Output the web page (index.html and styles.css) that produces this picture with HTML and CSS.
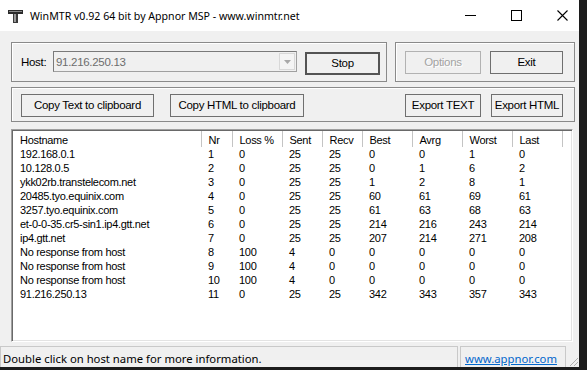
FILE: index.html
```html
<!DOCTYPE html>
<html lang="en">

<head>
    <meta charset="UTF-8">
    <title>WinMTR v0.92 64 bit by Appnor MSP - www.winmtr.net</title>
    <link rel="stylesheet" href="styles.css">
</head>

<body>
    <div class="window">
        <!-- Title bar -->
        <div class="titlebar">
            <svg class="app-icon" width="15" height="13" viewBox="0 0 15 13">
                <rect x="0" y="0" width="15" height="4" fill="#2b2b2b"/>
                <rect x="1" y="1" width="13" height="1" fill="#8a8a8a"/>
                <rect x="5" y="4" width="5" height="9" fill="#3a3a3a"/>
                <rect x="6" y="4" width="2" height="8" fill="#9a9a9a"/>
            </svg>
            <span class="title">WinMTR v0.92 64 bit by Appnor MSP - www.winmtr.net</span>
            <div class="controls">
                <span class="ctl">
                    <svg width="11" height="11" viewBox="0 0 11 11"><rect x="0" y="5" width="11" height="1" fill="#000"/></svg>
                </span>
                <span class="ctl">
                    <svg width="11" height="11" viewBox="0 0 11 11"><rect x="0.5" y="0.5" width="10" height="10" fill="none" stroke="#000"/></svg>
                </span>
                <span class="ctl">
                    <svg width="11" height="11" viewBox="0 0 11 11"><path d="M0.5 0.5 L10.5 10.5 M10.5 0.5 L0.5 10.5" stroke="#000" stroke-width="1.1"/></svg>
                </span>
            </div>
        </div>

        <!-- Client area -->
        <div class="client">
            <div class="top-row">
                <div class="group host-group">
                    <span class="host-label">Host:</span>
                    <div class="combo">
                        <span class="combo-text">91.216.250.13</span>
                        <span class="combo-drop">
                            <svg width="7" height="4" viewBox="0 0 7 4"><path d="M0 0 H7 L3.5 4 Z" fill="#a8a8a8"/></svg>
                        </span>
                    </div>
                    <button class="btn btn-default stop-btn">Stop</button>
                </div>
                <div class="group side-group">
                    <button class="btn btn-disabled options-btn">Options</button>
                    <button class="btn exit-btn">Exit</button>
                </div>
            </div>

            <div class="group tools">
                <button class="btn copy-text">Copy Text to clipboard</button>
                <button class="btn copy-html">Copy HTML to clipboard</button>
                <button class="btn export-text">Export TEXT</button>
                <button class="btn export-html">Export HTML</button>
            </div>

            <div class="list">
                <table class="hops">
                    <colgroup>
                        <col class="c-host">
                        <col class="c-nr">
                        <col class="c-50">
                        <col class="c-40">
                        <col class="c-40">
                        <col class="c-50">
                        <col class="c-50">
                        <col class="c-50">
                        <col class="c-50">
                        <col class="c-fill">
                    </colgroup>
                    <thead>
                        <tr>
                            <th>Hostname</th>
                            <th>Nr</th>
                            <th>Loss %</th>
                            <th>Sent</th>
                            <th>Recv</th>
                            <th>Best</th>
                            <th>Avrg</th>
                            <th>Worst</th>
                            <th>Last</th>
                            <th></th>
                        </tr>
                    </thead>
                    <tbody>
                        <tr><td>192.168.0.1</td><td>1</td><td>0</td><td>25</td><td>25</td><td>0</td><td>0</td><td>1</td><td>0</td><td></td></tr>
                        <tr><td>10.128.0.5</td><td>2</td><td>0</td><td>25</td><td>25</td><td>0</td><td>1</td><td>6</td><td>2</td><td></td></tr>
                        <tr><td>ykk02rb.transtelecom.net</td><td>3</td><td>0</td><td>25</td><td>25</td><td>1</td><td>2</td><td>8</td><td>1</td><td></td></tr>
                        <tr><td>20485.tyo.equinix.com</td><td>4</td><td>0</td><td>25</td><td>25</td><td>60</td><td>61</td><td>69</td><td>61</td><td></td></tr>
                        <tr><td>3257.tyo.equinix.com</td><td>5</td><td>0</td><td>25</td><td>25</td><td>61</td><td>63</td><td>68</td><td>63</td><td></td></tr>
                        <tr><td>et-0-0-35.cr5-sin1.ip4.gtt.net</td><td>6</td><td>0</td><td>25</td><td>25</td><td>214</td><td>216</td><td>243</td><td>214</td><td></td></tr>
                        <tr><td>ip4.gtt.net</td><td>7</td><td>0</td><td>25</td><td>25</td><td>207</td><td>214</td><td>271</td><td>208</td><td></td></tr>
                        <tr><td>No response from host</td><td>8</td><td>100</td><td>4</td><td>0</td><td>0</td><td>0</td><td>0</td><td>0</td><td></td></tr>
                        <tr><td>No response from host</td><td>9</td><td>100</td><td>4</td><td>0</td><td>0</td><td>0</td><td>0</td><td>0</td><td></td></tr>
                        <tr><td>No response from host</td><td>10</td><td>100</td><td>4</td><td>0</td><td>0</td><td>0</td><td>0</td><td>0</td><td></td></tr>
                        <tr><td>91.216.250.13</td><td>11</td><td>0</td><td>25</td><td>25</td><td>342</td><td>343</td><td>357</td><td>343</td><td></td></tr>
                    </tbody>
                </table>
            </div>
        </div>

        <!-- Status bar -->
        <div class="statusbar">
            <div class="panel panel-info">Double click on host name for more information.</div>
            <div class="panel panel-link"><a href="#">www.appnor.com</a></div>
            <div class="grip">
                <svg width="12" height="12" viewBox="0 0 12 12">
                    <path d="M11 3 L3 11 M11 7 L7 11" stroke="#b0b0b0" stroke-width="1"/>
                </svg>
            </div>
        </div>
    </div>
</body>

</html>
```

FILE: styles.css
```css
/* General styles */
* {
    box-sizing: border-box;
    margin: 0;
    padding: 0;
}

:root {
    --face: #f0f0f0;
    --desktop: #1c1c1c;
    --edge: #8a8a8a;
    --btn-border: #6f6f6f;
    --text: #000000;
}

body {
    background-color: var(--desktop);
    width: 587px;
    height: 370px;
    overflow: hidden;
    font-family: 'Liberation Sans', Arial, sans-serif;
    color: var(--text);
}

.window {
    width: 579px;
    height: 367px;
    background-color: var(--face);
    overflow: hidden;
    display: flex;
    flex-direction: column;
}

/* Title bar */
.titlebar {
    height: 31px;
    background-color: #ffffff;
    display: flex;
    align-items: center;
    padding-left: 8px;
}

.app-icon {
    display: block;
    margin-top: 1px;
}

.title {
    margin-left: 7px;
    font-family: 'Noto Sans', sans-serif;
    font-size: 10.6px;
    color: #000;
}

.controls {
    margin-left: auto;
    margin-right: -6px;
    display: flex;
    height: 31px;
}

.ctl {
    width: 46px;
    height: 31px;
    display: flex;
    align-items: center;
    justify-content: center;
}

.ctl svg {
    display: block;
}

/* Client area */
.client {
    padding: 11px 0 0 11px;
    font-size: 11px;
    letter-spacing: -0.3px;
}

.top-row {
    display: flex;
    gap: 8px;
}

.group {
    border: 1px solid var(--edge);
    box-shadow: inset 1px 1px 0 #ffffff;
    display: flex;
    align-items: center;
}

.host-group {
    width: 376px;
    height: 40px;
    padding-left: 9px;
}

.host-label {
    width: 32px;
    font-size: 11.5px;
}

.combo {
    width: 244px;
    height: 21px;
    border: 1px solid #a0a0a0;
    border-top-color: #7a7a7a;
    border-left-color: #7a7a7a;
    background-color: var(--face);
    display: flex;
    align-items: center;
    padding: 0 1px 0 2px;
    margin-top: -1px;
}

.combo-text {
    color: #6d6d6d;
    font-size: 11.5px;
}

.combo-drop {
    margin-left: auto;
    width: 16px;
    height: 17px;
    border: 1px solid #d8d8d8;
    background-color: #f4f4f4;
    display: flex;
    align-items: center;
    justify-content: center;
}

.combo-drop svg {
    display: block;
}

/* Buttons */
.btn {
    height: 23px;
    background-color: var(--face);
    border: 1px solid var(--btn-border);
    font-family: 'Liberation Sans', Arial, sans-serif;
    font-size: 11.5px;
    letter-spacing: -0.3px;
    color: #000;
}

.btn-default {
    border: 2px solid #545454;
}

.btn-disabled {
    color: #a3a3a3;
    border-color: #b2b2b2;
    text-shadow: 1px 1px 0 #ffffff;
}

.stop-btn {
    width: 75px;
    margin-left: 8px;
    margin-top: 2px;
}

.side-group {
    width: 180px;
    height: 40px;
    padding-left: 9px;
    gap: 9px;
}

.options-btn {
    width: 76px;
}

.exit-btn {
    width: 73px;
}

.tools {
    margin-top: 5px;
    width: 564px;
    height: 35px;
    padding: 1px 11px 0 9px;
}

.copy-text {
    width: 133px;
}

.copy-html {
    width: 134px;
    margin-left: 16px;
}

.export-text {
    width: 76px;
    margin-left: auto;
}

.export-html {
    width: 72px;
    margin-left: 10px;
}

/* Hop list */
.list {
    margin-top: 7px;
    width: 562px;
    height: 213px;
    background-color: #ffffff;
    border: 1px solid;
    border-color: #a0a0a0 #ffffff #ffffff #a0a0a0;
    box-shadow: inset 1px 1px 0 #696969, inset -1px -1px 0 #e3e3e3;
    padding: 1px 0 0 1px;
    overflow: hidden;
}

.hops {
    table-layout: fixed;
    border-collapse: collapse;
    width: 559px;
}

.c-host { width: 188px; }
.c-nr { width: 31px; }
.c-50 { width: 50px; }
.c-40 { width: 40px; }
.c-fill { width: 10px; }

.hops th {
    height: 16px;
    font-weight: normal;
    text-align: left;
    padding: 3px 0 0 7px;
    border-right: 1px solid #c4c4c4;
    white-space: nowrap;
    overflow: hidden;
    line-height: 13px;
    vertical-align: top;
}

.hops td {
    height: 14px;
    padding: 0 0 0 7px;
    line-height: 14px;
    white-space: nowrap;
    overflow: hidden;
}

/* Status bar */
.statusbar {
    margin-top: 4px;
    height: 21px;
    display: flex;
    font-family: 'Noto Sans', sans-serif;
    font-size: 11.3px;
}

.panel {
    border: 1px solid #c9c9c9;
    border-bottom: none;
    display: flex;
    align-items: center;
    padding: 2px 0 0 2px;
}

.panel-info {
    width: 458px;
}

.panel-link {
    width: 106px;
    margin-left: 2px;
    padding-left: 4px;
}

.panel-link a {
    color: #0066cc;
    text-decoration: underline;
}

.grip {
    flex: 1;
    display: flex;
    align-items: flex-end;
    justify-content: flex-end;
}

.grip svg {
    display: block;
}
```
